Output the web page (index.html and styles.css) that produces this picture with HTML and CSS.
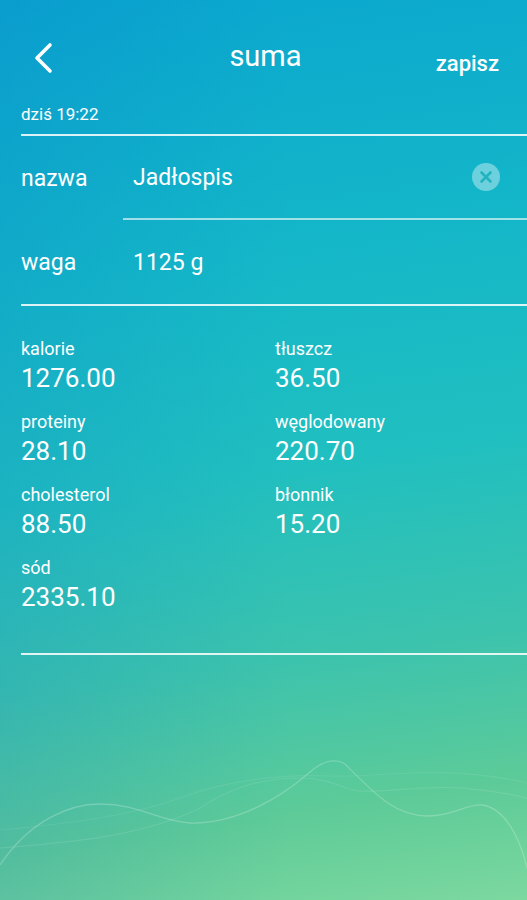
FILE: index.html
```html
<!DOCTYPE html>
<html lang="pl">
<head>
    <meta charset="UTF-8">
    <meta name="viewport" content="width=device-width, initial-scale=1.0">
    <title>suma</title>
    <link rel="stylesheet" href="styles.css">
</head>
<body>
    <header class="topbar">
        <a class="back" href="#">
            <svg width="22" height="32" viewBox="0 0 22 32">
                <path d="M18 3 L5 16 L18 29" fill="none" stroke="#fff" stroke-width="3.6" stroke-linecap="round" stroke-linejoin="round"/>
            </svg>
        </a>
        <h1 class="title">suma</h1>
        <button class="save">zapisz</button>
    </header>

    <div class="stamp">dziś 19:22</div>

    <section class="fields">
        <div class="field field-name">
            <label class="field-label">nazwa</label>
            <div class="field-input">
                <span>Jadłospis</span>
                <svg class="clear" width="28" height="28" viewBox="0 0 28 28">
                    <circle cx="14" cy="14" r="14" fill="rgba(255,255,255,0.38)"/>
                    <path d="M9.5 9.5 L18.5 18.5 M18.5 9.5 L9.5 18.5" stroke="#22b3c0" stroke-width="2.6" stroke-linecap="round"/>
                </svg>
            </div>
        </div>
        <div class="field field-weight">
            <label class="field-label">waga</label>
            <div class="field-value">1125 g</div>
        </div>
    </section>

    <section class="stats">
        <div class="stat"><div class="stat-label">kalorie</div><div class="stat-value">1276.00</div></div>
        <div class="stat"><div class="stat-label">tłuszcz</div><div class="stat-value">36.50</div></div>
        <div class="stat"><div class="stat-label">proteiny</div><div class="stat-value">28.10</div></div>
        <div class="stat"><div class="stat-label">węglodowany</div><div class="stat-value">220.70</div></div>
        <div class="stat"><div class="stat-label">cholesterol</div><div class="stat-value">88.50</div></div>
        <div class="stat"><div class="stat-label">błonnik</div><div class="stat-value">15.20</div></div>
        <div class="stat"><div class="stat-label">sód</div><div class="stat-value">2335.10</div></div>
    </section>

    <svg class="waves" width="527" height="160" viewBox="0 0 527 160">
        <path d="M0 127 C30 82 70 66 100 66 C140 66 160 84 190 85 C240 86 285 56 310 34 C324 22 335 20 345 26 C375 56 395 78 428 78 C455 78 465 66 482 67 C505 70 520 100 527 130" fill="none" stroke="rgba(255,255,255,0.22)" stroke-width="1.3"/>
        <path d="M0 110 C60 105 140 100 200 70 C230 50 260 40 300 40 C330 40 345 52 360 53 C400 55 440 40 527 60" fill="none" stroke="rgba(255,255,255,0.1)" stroke-width="1.2"/>
        <path d="M0 92 C80 85 140 75 180 60 C220 45 270 36 330 38 C380 40 440 25 527 45" fill="none" stroke="rgba(255,255,255,0.08)" stroke-width="1.2"/>
    </svg>
</body>
</html>
```
FILE: styles.css
```css
body {
    font-family: Roboto, "Noto Sans", sans-serif;
    margin: 0;
    padding: 0;
    width: 527px;
    height: 900px;
    overflow: hidden;
    color: #fff;
    background:
        linear-gradient(to right, rgba(0, 90, 200, 0.12), rgba(0, 90, 200, 0) 55%),
        linear-gradient(172deg, #0aa6cf 0%, #14b7c8 30%, #20bfc0 52%, #3cc3ad 72%, #5ecb98 88%, #7cd89f 100%);
}
.topbar {
    display: grid;
    grid-template-columns: 1fr auto 1fr;
    align-items: center;
    height: 80px;
    margin-top: 18px;
    padding: 0 28px 0 32px;
}
.back {
    display: flex;
}
.title {
    margin: 0 0 4px;
    font-size: 29px;
    font-weight: 400;
}
.save {
    justify-self: end;
    background: none;
    border: none;
    padding: 10px 0 0;
    color: #fff;
    font-family: inherit;
    font-size: 22px;
    font-weight: 500;
}
.stamp {
    margin-left: 21px;
    padding: 8px 0 11px;
    font-size: 17px;
    line-height: 17px;
    border-bottom: 2px solid rgba(255, 255, 255, 0.85);
}
.fields {
    margin-left: 21px;
    border-bottom: 2px solid rgba(255, 255, 255, 0.85);
    font-size: 23px;
}
.field {
    display: flex;
    align-items: stretch;
}
.field-label {
    width: 102px;
    display: flex;
    align-items: center;
}
.field-name {
    height: 84px;
}
.field-input {
    flex: 1;
    display: flex;
    align-items: center;
    justify-content: space-between;
    padding: 0 27px 0 10px;
    border-bottom: 2px solid rgba(255, 255, 255, 0.6);
}
.field-weight {
    height: 84px;
}
.field-value {
    display: flex;
    align-items: center;
    padding-left: 10px;
}
.stats {
    display: grid;
    grid-template-columns: 254px 1fr;
    row-gap: 19px;
    margin-left: 21px;
    padding: 33px 0 41px;
    border-bottom: 2px solid rgba(255, 255, 255, 0.85);
}
.stat-label {
    font-size: 18px;
    line-height: 20px;
}
.stat-value {
    margin-top: 4px;
    font-size: 26px;
    line-height: 30px;
}
.waves {
    display: block;
    margin-top: 83px;
}
```
